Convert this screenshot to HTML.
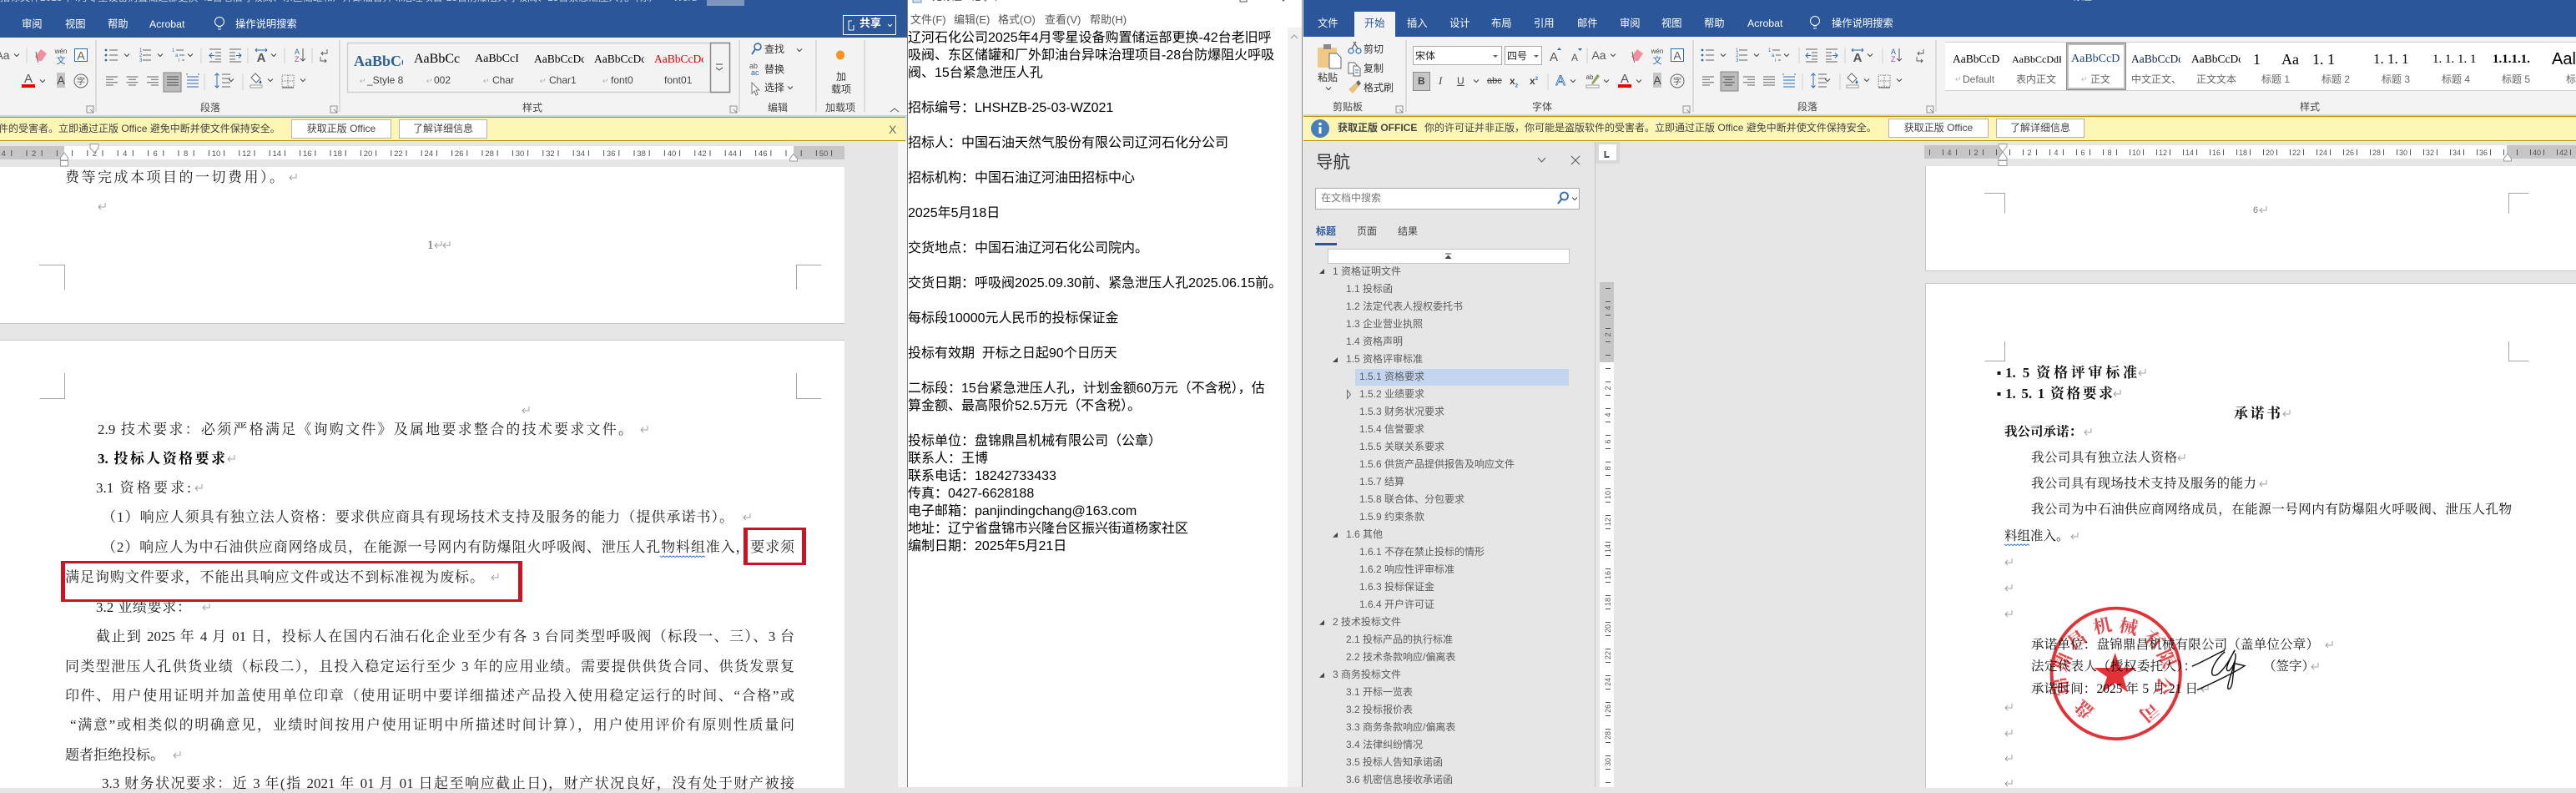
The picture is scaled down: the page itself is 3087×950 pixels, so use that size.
<!DOCTYPE html>
<html lang="zh-CN"><head><meta charset="utf-8"><title>Word 文档与记事本</title>
<style>
html,body{margin:0;padding:0;background:#e6e6e6}
body{position:relative;width:3087px;height:943px;overflow:hidden;font-family:"Liberation Sans","Noto Sans CJK SC",sans-serif}
.b{position:absolute}
.s{position:absolute;white-space:nowrap;font:12px/20px "Liberation Sans","Noto Sans CJK SC",sans-serif;color:#444}
.w{color:#fff;font-size:12.3px}
.d{position:absolute;white-space:nowrap;height:22px;font:15.5px/22px "Liberation Serif","Noto Serif CJK SC",serif;color:#111;text-align:justify;text-align-last:justify}
.l{font-size:17px;color:#222}
.h{font-size:17px;font-weight:700}
.g{position:absolute;overflow:hidden;white-space:nowrap;height:22px;font:14px/22px "Liberation Serif","Noto Serif CJK SC",serif;color:#000}
.btn{position:absolute;background:#fff;border:1px solid #b2b2b2;box-sizing:border-box;text-align:center;font:12px/21px "Liberation Sans","Noto Sans CJK SC",sans-serif;color:#444;white-space:nowrap}
.m{position:absolute;white-space:nowrap;font:13px/20px "Liberation Sans","Noto Sans CJK SC",sans-serif;color:#555;top:14px}
#np{position:absolute;left:1088px;top:35px;margin:0;font:16px/21px "Liberation Sans","Noto Sans CJK SC",sans-serif;color:#000;white-space:pre}
#nav{position:absolute;left:1555px;top:315.2px;font:12px/21px "Liberation Sans","Noto Sans CJK SC",sans-serif;color:#5c5c5c;white-space:nowrap}
#nav div{height:21px}
.a{padding-left:42px}.e{padding-left:58px}.f{padding-left:74px}
</style></head><body>

<!-- LEFT WINDOW -->
<div class="b" style="left:0;top:0;width:1087px;height:45px;background:#2b579a"></div>
<div class="b" style="left:0;top:45px;width:1087px;height:94px;background:#f3f3f3"></div>
<div class="b" style="left:0;top:138px;width:1087px;height:2px;background:#d2d2d2"></div>
<div class="b" style="left:0;top:140px;width:1085px;height:29px;background:#fcf6b4;border-top:1.5px solid #b88f00;border-bottom:1.5px solid #b88f00;box-sizing:border-box"></div>
<div class="b" style="left:847px;top:0;width:45px;height:7px;background:#7e97bf"></div>
<div class="s" style="left:0;top:-13px;color:#c7d3e6">招标文件2025年4月零星设备购置储运部更换-42台老旧呼吸阀、东区储罐和厂外卸油台异味治理项目-28台防爆阻火呼吸阀、15台紧急泄压人孔（标）&nbsp;&nbsp;-&nbsp;&nbsp;Word</div>
<div class="s w" style="left:26px;top:19px">审阅</div>
<div class="s w" style="left:78px;top:19px">视图</div>
<div class="s w" style="left:129px;top:19px">帮助</div>
<div class="s w" style="left:179px;top:19px">Acrobat</div>
<div class="s w" style="left:282px;top:19px">操作说明搜索</div>
<div class="b" style="left:1010px;top:18px;width:64px;height:24px;border:1px solid #fff;box-sizing:border-box"></div>
<div class="s w" style="left:1030px;top:18px;font-size:13px;font-weight:700">共享</div>

<div class="g" style="left:424px;top:62px;width:59px;font-size:18px;font-weight:700;color:#2e5f95">AaBbCc</div>
<div class="g" style="left:496px;top:60px;width:59px;font-size:16px">AaBbCc</div>
<div class="g" style="left:569px;top:60px;width:60px">AaBbCcI</div>
<div class="g" style="left:640px;top:60px;width:60px;font-size:13.5px">AaBbCcDc</div>
<div class="g" style="left:712px;top:60px;width:60px;font-size:13.5px">AaBbCcDc</div>
<div class="g" style="left:784px;top:60px;width:59px;font-size:13.5px;color:#e00000">AaBbCcDc</div>
<div class="s" style="left:440px;top:86px">_Style 8</div>
<div class="s" style="left:520px;top:86px">002</div>
<div class="s" style="left:590px;top:86px">Char</div>
<div class="s" style="left:658px;top:86px">Char1</div>
<div class="s" style="left:732px;top:86px">font0</div>
<div class="s" style="left:796px;top:86px">font01</div>
<div class="s" style="left:916px;top:49px;color:#333">查找</div>
<div class="s" style="left:916px;top:73px;color:#333">替换</div>
<div class="s" style="left:916px;top:95px;color:#333">选择</div>
<div class="s" style="left:1002px;top:82px;color:#333">加</div>
<div class="s" style="left:996px;top:97px;color:#333">载项</div>
<div class="s" style="left:240px;top:119px">段落</div>
<div class="s" style="left:626px;top:119px">样式</div>
<div class="s" style="left:920px;top:119px">编辑</div>
<div class="s" style="left:989px;top:119px">加载项</div>
<div class="s" style="left:-2px;top:144px;width:340px;overflow:hidden">件的受害者。立即通过正版 Office 避免中断并使文件保持安全。</div>
<div class="btn" style="left:349px;top:143px;width:120px;height:23px">获取正版 Office</div>
<div class="btn" style="left:478px;top:143px;width:106px;height:23px">了解详细信息</div>
<div class="s" style="left:1065px;top:145px;font-size:14px;color:#666">X</div>

<div class="b" style="left:0;top:175px;width:77px;height:16px;background:#c6c6c6"></div>
<div class="b" style="left:77px;top:175px;width:874px;height:16px;background:#fff"></div>
<div class="b" style="left:951px;top:175px;width:61px;height:16px;background:#c6c6c6"></div>
<div class="b" style="left:0;top:200px;width:1012px;height:187px;background:#fff;border-bottom:1px solid #c6c6c6"></div>
<div class="b" style="left:0;top:407px;width:1012px;height:536px;background:#fff;border-top:1px solid #c6c6c6"></div>
<div class="b" style="left:1076px;top:170px;width:11px;height:773px;background:#f6f6f6"></div>

<div class="d l" style="left:78px;top:202px;width:262px">费等完成本项目的一切费用）。</div>
<div class="s" style="left:512px;top:284px;font:15px/20px 'Liberation Serif',serif;color:#555">1</div>
<div class="d l" style="left:117px;top:504px;width:641px">2.9 技术要求：必须严格满足《询购文件》及属地要求整合的技术要求文件。</div>
<div class="d l" style="left:117px;top:539px;width:153px;font-weight:700;color:#000">3. 投标人资格要求</div>
<div class="d l" style="left:115px;top:574px;width:114px">3.1 资格要求:</div>
<div class="d l" style="left:122px;top:609px;width:757px">（1）响应人须具有独立法人资格：要求供应商具有现场技术支持及服务的能力（提供承诺书）。</div>
<div class="d l" style="left:122px;top:645px;width:830px">（2）响应人为中石油供应商网络成员，在能源一号网内有防爆阻火呼吸阀、泄压人孔物料组准入，要求须</div>
<div class="d l" style="left:78px;top:681px;width:502px">满足询购文件要求，不能出具响应文件或达不到标准视为废标。</div>
<div class="d l" style="left:115px;top:717px;width:114px">3.2 业绩要求：</div>
<div class="d l" style="left:115px;top:752px;width:837px">截止到 2025 年 4 月 01 日，投标人在国内石油石化企业至少有各 3 台同类型呼吸阀（标段一、三）、3 台</div>
<div class="d l" style="left:78px;top:788px;width:874px">同类型泄压人孔供货业绩（标段二），且投入稳定运行至少 3 年的应用业绩。需要提供供货合同、供货发票复</div>
<div class="d l" style="left:78px;top:823px;width:874px">印件、用户使用证明并加盖使用单位印章（使用证明中要详细描述产品投入使用稳定运行的时间、“合格”或</div>
<div class="d l" style="left:84px;top:858px;width:868px">“满意”或相类似的明确意见，业绩时间按用户使用证明中所描述时间计算），用户使用评价有原则性质量问</div>
<div class="d l" style="left:78px;top:894px;width:118px">题者拒绝投标。</div>
<div class="d l" style="left:122px;top:928px;width:830px">3.3 财务状况要求：近 3 年(指 2021 年 01 月 01 日起至响应截止日)，财产状况良好，没有处于财产被接</div>
<div class="b" style="left:891px;top:632px;width:75px;height:45px;box-sizing:border-box;border:solid #cc1325;border-width:3px 5px"></div>
<div class="b" style="left:73px;top:672px;width:553px;height:49px;box-sizing:border-box;border:solid #cc1325;border-width:3px 5px"></div>

<!-- NOTEPAD -->
<div class="b" style="left:1087px;top:0;width:473px;height:943px;background:#fff;border-left:1px solid #808080;box-sizing:border-box"></div>
<div class="b" style="left:1543px;top:33px;width:16.5px;height:910px;background:#f0f0f0"></div>
<div class="b" style="left:1559.5px;top:0;width:1px;height:943px;background:#8a8a8a"></div>
<div class="b" style="left:1560.5px;top:0;width:1.5px;height:943px;background:#eee"></div>
<div class="s" style="left:1117px;top:-14px;color:#444">无标题 - 记事本</div>
<div class="m" style="left:1091px">文件(F)</div>
<div class="m" style="left:1143px">编辑(E)</div>
<div class="m" style="left:1196px">格式(O)</div>
<div class="m" style="left:1252px">查看(V)</div>
<div class="m" style="left:1306px">帮助(H)</div>
<pre id="np">辽河石化公司2025年4月零星设备购置储运部更换-42台老旧呼
吸阀、东区储罐和厂外卸油台异味治理项目-28台防爆阻火呼吸
阀、15台紧急泄压人孔

招标编号：LHSHZB-25-03-WZ021

招标人：中国石油天然气股份有限公司辽河石化分公司

招标机构：中国石油辽河油田招标中心

2025年5月18日

交货地点：中国石油辽河石化公司院内。

交货日期：呼吸阀2025.09.30前、紧急泄压人孔2025.06.15前。

每标段10000元人民币的投标保证金

投标有效期  开标之日起90个日历天

二标段：15台紧急泄压人孔，计划金额60万元（不含税），估
算金额、最高限价52.5万元（不含税）。

投标单位：盘锦鼎昌机械有限公司（公章）
联系人：王博
联系电话：18242733433
传真：0427-6628188
电子邮箱：panjindingchang@163.com
地址：辽宁省盘锦市兴隆台区振兴街道杨家社区
编制日期：2025年5月21日</pre>

<!-- RIGHT WINDOW -->
<div class="b" style="left:1562px;top:0;width:1525px;height:44px;background:#2b579a"></div>
<div class="b" style="left:1562px;top:44px;width:1525px;height:94px;background:#f3f3f3"></div>
<div class="b" style="left:1562px;top:137px;width:1525px;height:2px;background:#d2d2d2"></div>
<div class="b" style="left:1562px;top:139px;width:1525px;height:30px;background:#fcf6b4;border-top:1.5px solid #b88f00;border-bottom:1.5px solid #b88f00;box-sizing:border-box"></div>
<div class="b" style="left:1623px;top:14px;width:49px;height:30px;background:#f3f3f3"></div>
<div class="s" style="left:2483px;top:-14px;color:#c7d3e6">标题 - Word</div>
<div class="s w" style="left:1579px;top:18px">文件</div>
<div class="s" style="left:1635px;top:18px;font-size:12.3px;color:#2b579a">开始</div>
<div class="s w" style="left:1686px;top:18px">插入</div>
<div class="s w" style="left:1737px;top:18px">设计</div>
<div class="s w" style="left:1787px;top:18px">布局</div>
<div class="s w" style="left:1838px;top:18px">引用</div>
<div class="s w" style="left:1890px;top:18px">邮件</div>
<div class="s w" style="left:1941px;top:18px">审阅</div>
<div class="s w" style="left:1991px;top:18px">视图</div>
<div class="s w" style="left:2042px;top:18px">帮助</div>
<div class="s w" style="left:2094px;top:18px">Acrobat</div>
<div class="s w" style="left:2195px;top:18px">操作说明搜索</div>

<div class="s" style="left:1579px;top:83px;color:#333">粘贴</div>
<div class="s" style="left:1634px;top:49px;color:#333">剪切</div>
<div class="s" style="left:1634px;top:72px;color:#333">复制</div>
<div class="s" style="left:1634px;top:95px;color:#333">格式刷</div>
<div class="s" style="left:1597px;top:118px">剪贴板</div>
<div class="s" style="left:1836px;top:118px">字体</div>
<div class="s" style="left:2154px;top:118px">段落</div>
<div class="s" style="left:2756px;top:118px">样式</div>
<div class="b" style="left:1693px;top:55px;width:107px;height:23px;background:#fff;border:1px solid #ababab;box-sizing:border-box"></div>
<div class="b" style="left:1803px;top:55px;width:45px;height:23px;background:#fff;border:1px solid #ababab;box-sizing:border-box"></div>
<div class="s" style="left:1696px;top:57px;color:#222">宋体</div>
<div class="s" style="left:1806px;top:57px;color:#222">四号</div>
<div class="b" style="left:1693px;top:86px;width:21px;height:23px;background:#c6c6c6;border:1px solid #8a8a8a;box-sizing:border-box"></div>
<div class="s" style="left:1699px;top:87px;font-weight:700;color:#444">B</div>
<div class="s" style="left:1724px;top:87px;font:italic 13px/20px 'Liberation Serif',serif">I</div>
<div class="s" style="left:1746px;top:87px;text-decoration:underline">U</div>
<div class="s" style="left:1782px;top:87px;text-decoration:line-through;font-size:11px">abc</div>
<div class="s" style="left:1809px;top:87px;font-weight:700">x<sub style="font-size:6px;color:#2b6cb0">2</sub></div>
<div class="s" style="left:1833px;top:87px;font-weight:700">x<sup style="font-size:6px;color:#2b6cb0;line-height:0">2</sup></div>

<div class="b" style="left:2331px;top:50px;width:756px;height:59px;background:#fff;border-top:1.5px solid #d0d0d0;border-bottom:1.5px solid #d0d0d0;box-sizing:border-box"></div>
<div class="b" style="left:2476px;top:51px;width:72px;height:57px;border:3px solid #bdbdbd;outline:1px solid #8a8a8a;outline-offset:-1px;box-sizing:border-box"></div>
<div class="g" style="left:2340px;top:60px;width:57px;font-size:13.5px">AaBbCcDc</div>
<div class="g" style="left:2411px;top:60px;width:59px;font-size:12px">AaBbCcDdE</div>
<div class="g" style="left:2482px;top:60px;width:60px;color:#1f3f77">AaBbCcD</div>
<div class="g" style="left:2554px;top:60px;width:59px;font-size:13.5px;color:#102040">AaBbCcDd</div>
<div class="g" style="left:2626px;top:60px;width:59px;font-size:13.5px">AaBbCcDc</div>
<div class="g" style="left:2700px;top:60px;width:20px;font-size:18px">1</div>
<div class="g" style="left:2734px;top:60px;width:26px;font-size:18px">Aa</div>
<div class="g" style="left:2771px;top:60px;width:35px;font-size:18px">1. 1</div>
<div class="g" style="left:2844px;top:60px;width:55px;font-size:17px">1. 1. 1</div>
<div class="g" style="left:2915px;top:60px;width:60px;font-size:15px">1. 1. 1. 1</div>
<div class="g" style="left:2987px;top:60px;width:60px;font-size:15px;font-weight:700">1.1.1.1.</div>
<div class="g" style="left:3058px;top:60px;width:29px;font:20px/22px 'Liberation Sans',sans-serif">Aal</div>
<div class="s" style="left:2352px;top:85px;color:#666">Default</div>
<div class="s" style="left:2416px;top:85px;color:#666">表内正文</div>
<div class="s" style="left:2505px;top:85px;color:#666">正文</div>
<div class="s" style="left:2554px;top:85px;color:#666">中文正文、</div>
<div class="s" style="left:2632px;top:85px;color:#666">正文文本</div>
<div class="s" style="left:2710px;top:85px;color:#666">标题 1</div>
<div class="s" style="left:2782px;top:85px;color:#666">标题 2</div>
<div class="s" style="left:2854px;top:85px;color:#666">标题 3</div>
<div class="s" style="left:2926px;top:85px;color:#666">标题 4</div>
<div class="s" style="left:2998px;top:85px;color:#666">标题 5</div>
<div class="s" style="left:3075px;top:85px;color:#666">标</div>

<div class="s" style="left:1603px;top:143px;font-weight:700;color:#444;font-size:12px">获取正版 OFFICE</div>
<div class="s" style="left:1707px;top:143px;font-size:12px;width:541px;text-align:justify;text-align-last:justify">你的许可证并非正版，你可能是盗版软件的受害者。立即通过正版 Office 避免中断并使文件保持安全。</div>
<div class="btn" style="left:2263px;top:142px;width:120px;height:23px">获取正版 Office</div>
<div class="btn" style="left:2392px;top:142px;width:106px;height:23px">了解详细信息</div>

<!-- Nav pane -->
<div class="b" style="left:1911px;top:170px;width:1px;height:773px;background:#c6c6c6"></div>
<div class="s" style="left:1577px;top:180px;font-size:20.5px;line-height:30px;color:#333">导航</div>
<div class="b" style="left:1576px;top:225px;width:317px;height:26px;background:#fff;border:1px solid #aaa;box-sizing:border-box"></div>
<div class="s" style="left:1583px;top:227px;color:#777">在文档中搜索</div>
<div class="s" style="left:1577px;top:267px;font-weight:700;color:#2b579a">标题</div>
<div class="s" style="left:1626px;top:267px">页面</div>
<div class="s" style="left:1675px;top:267px">结果</div>
<div class="b" style="left:1576px;top:291px;width:26px;height:3px;background:#2b579a"></div>
<div class="b" style="left:1591px;top:298px;width:290px;height:18px;background:#fff;border:1px solid #c6c6c6;box-sizing:border-box"></div>
<div class="b" style="left:1624px;top:442px;width:256px;height:20px;background:#c4d5f0"></div>
<div id="nav">
<div class="a">1 资格证明文件</div>
<div class="e">1.1 投标函</div>
<div class="e">1.2 法定代表人授权委托书</div>
<div class="e">1.3 企业营业执照</div>
<div class="e">1.4 资格声明</div>
<div class="e">1.5 资格评审标准</div>
<div class="f">1.5.1 资格要求</div>
<div class="f">1.5.2 业绩要求</div>
<div class="f">1.5.3 财务状况要求</div>
<div class="f">1.5.4 信誉要求</div>
<div class="f">1.5.5 关联关系要求</div>
<div class="f">1.5.6 供货产品提供报告及响应文件</div>
<div class="f">1.5.7 结算</div>
<div class="f">1.5.8 联合体、分包要求</div>
<div class="f">1.5.9 约束条款</div>
<div class="e">1.6 其他</div>
<div class="f">1.6.1 不存在禁止投标的情形</div>
<div class="f">1.6.2 响应性评审标准</div>
<div class="f">1.6.3 投标保证金</div>
<div class="f">1.6.4 开户许可证</div>
<div class="a">2 技术投标文件</div>
<div class="e">2.1 投标产品的执行标准</div>
<div class="e">2.2 技术条款响应/偏离表</div>
<div class="a">3 商务投标文件</div>
<div class="e">3.1 开标一览表</div>
<div class="e">3.2 投标报价表</div>
<div class="e">3.3 商务条款响应/偏离表</div>
<div class="e">3.4 法律纠纷情况</div>
<div class="e">3.5 投标人告知承诺函</div>
<div class="e">3.6 机密信息接收承诺函</div>
</div>

<!-- Right ruler + pages -->
<div class="b" style="left:1912px;top:170px;width:29px;height:26px;background:#d8d8d8"></div>
<div class="b" style="left:1916px;top:173px;width:21px;height:19px;background:#fff"></div>
<div class="b" style="left:1917px;top:338px;width:17px;height:96px;background:#c6c6c6"></div>
<div class="b" style="left:1917px;top:434px;width:17px;height:509px;background:#fff"></div>
<div class="b" style="left:2306px;top:174px;width:94px;height:16px;background:#c6c6c6"></div>
<div class="b" style="left:2400px;top:174px;width:604px;height:16px;background:#fff"></div>
<div class="b" style="left:3004px;top:174px;width:83px;height:16px;background:#c6c6c6"></div>
<div class="b" style="left:2307px;top:199px;width:780px;height:125px;background:#fff;border-left:1px solid #c6c6c6;border-bottom:1px solid #c6c6c6"></div>
<div class="b" style="left:2307px;top:339px;width:780px;height:604px;background:#fff;border-left:1px solid #c6c6c6;border-top:1px solid #c6c6c6"></div>
<div class="s" style="left:2700px;top:242px;font-size:11px;color:#777">6</div>

<div class="d h" style="left:2403px;top:436px;width:158px">1. 5 资格评审标准</div>
<div class="d h" style="left:2403px;top:461px;width:129px">1. 5. 1 资格要求</div>
<div class="d h" style="left:2677px;top:485px;width:56px">承诺书</div>
<div class="d" style="left:2402px;top:507px;width:87px;font-weight:700;font-size:15.5px">我公司承诺：</div>
<div class="d" style="left:2434px;top:538px;width:175px">我公司具有独立法人资格</div>
<div class="d" style="left:2434px;top:569px;width:270px">我公司具有现场技术支持及服务的能力</div>
<div class="d" style="left:2434px;top:600px;width:576px">我公司为中石油供应商网络成员，在能源一号网内有防爆阻火呼吸阀、泄压人孔物</div>
<div class="d" style="left:2402px;top:632px;width:71px">料组准入。</div>
<div class="d" style="left:2434px;top:762px;width:345px">承诺单位：盘锦鼎昌机械有限公司（盖单位公章）</div>
<div class="d" style="left:2434px;top:788px;width:198px">法定代表人（授权委托人）：</div>
<div class="d" style="left:2712px;top:788px;width:50px">（签字）</div>
<div class="d" style="left:2434px;top:815px;width:200px">承诺时间：2025 年 5 月 21 日</div>

<!-- Overlay icons, rulers, marks -->
<svg class="b" style="left:0;top:0" width="3087" height="943" viewBox="0 0 3087 943" font-family="Liberation Sans, Noto Sans CJK SC, sans-serif">
<defs>
<path id="c" d="M-3 -1.5l3 3 3-3" fill="none" stroke="#444"/>
<path id="r" d="M4 -5v5h-8m3-3l-3 3 3 3" fill="none" stroke="#a0a0a0"/>
<path id="lau" d="M0 0h8v8h-8z M4 4l4 4m-3 0h3v-3" fill="none" stroke="#777" stroke-width=".8"/>
<path id="al" d="M-7-5h14M-7-1.7h9M-7 1.7h14M-7 5h9" stroke="#666" fill="none"/>
<path id="ac" d="M-7-5h14M-4.5-1.7h9M-7 1.7h14M-4.5 5h9" stroke="#666" fill="none"/>
<path id="ar" d="M-7-5h14M-2-1.7h9M-7 1.7h14M-2 5h9" stroke="#666" fill="none"/>
<path id="aj" d="M-7-5h14M-7-1.7h14M-7 1.7h14M-7 5h14" stroke="#666" fill="none"/>
<g id="para">
<circle cx="-7" cy="60" r="1.4" fill="#2b6cb0"/><circle cx="-7" cy="66" r="1.4" fill="#2b6cb0"/><circle cx="-7" cy="72" r="1.4" fill="#2b6cb0"/>
<path d="M-3 60h10M-3 66h10M-3 72h10" stroke="#666"/>
<use href="#c" x="18" y="66"/>
<text x="33" y="62" font-size="6" fill="#2b6cb0">1</text><text x="33" y="68" font-size="6" fill="#2b6cb0">2</text><text x="33" y="74" font-size="6" fill="#2b6cb0">3</text>
<path d="M37 60h10M37 66h10M37 72h10" stroke="#666"/>
<use href="#c" x="58" y="66"/>
<text x="72" y="62" font-size="6" fill="#2b6cb0">1</text><text x="76" y="68" font-size="6" fill="#2b6cb0">a</text><text x="80" y="74" font-size="6" fill="#2b6cb0">i</text>
<path d="M77 60h9M81 66h6M84 72h3" stroke="#666"/>
<use href="#c" x="94" y="66"/>
<path d="M117 59h14M124 63h7M124 67h7M124 71h7M117 74h14" stroke="#666" fill="none"/><path d="M123 66.5h-6m3-3l-3 3 3 3" stroke="#2b6cb0" fill="none"/>
<path d="M141 59h14M141 63h7M141 67h7M141 71h7M141 74h14" stroke="#666" fill="none"/><path d="M149 66.5h6m-3-3l3 3-3 3" stroke="#2b6cb0" fill="none"/>
<text x="179" y="74" font-size="15" font-weight="700" text-anchor="middle" fill="#555">A</text><path d="M172 60h14m-14 0l2-2m-2 2l2 2m12-2l-2-2m2 2l-2 2" stroke="#2b6cb0" fill="none"/>
<use href="#c" x="194" y="66"/>
<text x="219" y="65" font-size="9" fill="#2b6cb0">A</text><text x="219" y="74" font-size="9" fill="#8a4bb0">Z</text>
<path d="M229 58v15m-3-3l3 3 3-3" stroke="#555" fill="none"/>
<path d="M258 59v5h-7m2-2l-2 2 2 2M250 68v5h7m-2-2l2 2-2 2" stroke="#555" stroke-width=".9" fill="none"/>
<use href="#al" x="0" y="97"/><use href="#ac" x="24.5" y="97"/><use href="#ar" x="49" y="97"/><use href="#aj" x="73" y="97"/>
<path d="M90 88v2M104 88v2M90 92h14M90 96h14M90 100h14M90 104h14" stroke="#2b6cb0" fill="none"/>
<path d="M132 89h10M132 94h10M132 99h10M132 104h10" stroke="#666"/><path d="M126 88v17m-2.500-14.500l2.500-2.500 2.500 2.500m-5 12l2.500 2.500 2.500-2.500" stroke="#2b6cb0" fill="none"/>
<use href="#c" x="143" y="96"/>
<path d="M172 88l6 6-5 5-6-6z" fill="#fff" stroke="#666"/><path d="M178 96c2 3 2 4 0 4s-2-1 0-4" fill="#2b6cb0"/><rect x="166" y="102" width="14" height="3" fill="#fff" stroke="#999"/>
<use href="#c" x="190" y="96"/>
<path d="M204 90h14v14h-14z" fill="none" stroke="#777" stroke-dasharray="1 1"/><path d="M204 97h14M211 90v14" stroke="#777" stroke-dasharray="1 1"/><path d="M204 105h14" stroke="#555"/>
<use href="#c" x="229" y="96"/>
</g>
<g id="fontr">
<text x="1916" y="71" font-size="14" text-anchor="middle" fill="#555">Aa</text>
<use href="#c" x="1933" y="66"/>
<path d="M1955 68l7-9 7 5-6 9h-3z" fill="#ef8f9f"/><path d="M1956 62c1 5 1 9 3 13" stroke="#666" fill="none"/>
<text x="1986" y="64" font-size="8" text-anchor="middle" fill="#444">wén</text>
<text x="1986" y="76" font-size="11" text-anchor="middle" fill="#2b6cb0">文</text>
<rect x="2002.500" y="58.500" width="15" height="15" fill="#fff" stroke="#2b6cb0"/>
<text x="2010" y="71.500" font-size="14" text-anchor="middle" fill="#555">A</text>
<text x="1947" y="99" font-size="15" text-anchor="middle" fill="#555">A</text>
<rect x="1939" y="101" width="16" height="4" fill="#e00"/>
<use href="#c" x="1964" y="97"/>
<rect x="1981" y="87" width="10" height="18" fill="#c6c6c6"/>
<text x="1986" y="101" font-size="14" text-anchor="middle" fill="#444">A</text>
<circle cx="2010" cy="97" r="8" fill="none" stroke="#666"/>
<text x="2010" y="101" font-size="10" text-anchor="middle" fill="#555">字</text>
</g>
</defs>

<!-- left ribbon -->
<use href="#fontr" transform="translate(-1913 0)"/>
<use href="#para" transform="translate(134 0)"/>
<rect x="196" y="87" width="21" height="23" fill="#c6c6c6" stroke="#8a8a8a" style="mix-blend-mode:multiply"/>
<path d="M115 48v86M407 48v86M886 48v86M978 48v86M1036 48v86" stroke="#c6c6c6"/>
<path d="M241 57v19M297 57v19M341 57v19M374 57v19M245 88v20M291 88v20M32 57v19" stroke="#d0d0d0"/>
<use href="#lau" x="104" y="127"/><use href="#lau" x="396" y="127"/><use href="#lau" x="875" y="127"/>
<rect x="416.500" y="51.500" width="458" height="59" fill="none" stroke="#cfcfcf" stroke-width="1.500"/>
<rect x="851.500" y="51.500" width="23" height="59" fill="none" stroke="#8a8a8a" stroke-width="1.500"/>
<path d="M858 77h8M858 81l4 3 4-3" stroke="#444" fill="none"/>
<path d="M1067 134l5-4 5 4" fill="none" stroke="#555"/>
<use href="#r" transform="translate(434 97) scale(.6)"/><use href="#r" transform="translate(514 97) scale(.6)"/><use href="#r" transform="translate(582 97) scale(.6)"/><use href="#r" transform="translate(650 97) scale(.6)"/><use href="#r" transform="translate(725 97) scale(.6)"/>
<circle cx="908" cy="56" r="4" fill="none" stroke="#2b6cb0" stroke-width="1.500"/><path d="M905 59l-4 6" stroke="#2b6cb0" stroke-width="1.800"/>
<use href="#c" x="958" y="60"/>
<text x="898" y="82" font-size="9" fill="#555">ab</text><text x="900" y="90" font-size="9" fill="#2b6cb0">ac</text>
<path d="M901 99v13l3-3 2 5 2-1-2-5h4z" fill="#fff" stroke="#777"/>
<use href="#c" x="947" y="105"/>
<ellipse cx="1007" cy="66" rx="5" ry="5.500" fill="#f7941d"/>
<circle cx="263" cy="26" r="5.500" fill="none" stroke="#fff"/><path d="M261 32h4M261 35h4" stroke="#fff"/>
<path d="M1017 36v-11h4M1017 36h6v-6" stroke="#fff" fill="none"/><path d="M1064 29l2.500 2.500 2.500-2.500" stroke="#fff" fill="none"/>

<!-- left ruler -->
<line x1="-4.900" y1="183.500" x2="1012" y2="183.500" stroke="#555" stroke-width="7" stroke-dasharray="1 17.200"/>
<g font-size="9.500" fill="#555" text-anchor="middle">
<text x="4.200" y="187">4</text><text x="40.600" y="187">2</text><text x="113.400" y="187">2</text><text x="149.800" y="187">4</text><text x="186.200" y="187">6</text><text x="222.600" y="187">8</text><text x="259" y="187">10</text><text x="295.400" y="187">12</text><text x="331.800" y="187">14</text><text x="368.200" y="187">16</text><text x="404.600" y="187">18</text><text x="441" y="187">20</text><text x="477.400" y="187">22</text><text x="513.800" y="187">24</text><text x="550.200" y="187">26</text><text x="586.600" y="187">28</text><text x="623" y="187">30</text><text x="659.400" y="187">32</text><text x="695.800" y="187">34</text><text x="732.200" y="187">36</text><text x="768.600" y="187">38</text><text x="805" y="187">40</text><text x="841.400" y="187">42</text><text x="877.800" y="187">44</text><text x="914.200" y="187">46</text><text x="987" y="187">50</text>
</g>
<path d="M108 172.500h10v5l-5 5.500-5-5.500z" fill="#fff" stroke="#999"/>
<path d="M72.500 192v-3l4.500-6 4.500 6v3z" fill="#fff" stroke="#999"/><rect x="72.500" y="192.500" width="9" height="6.500" fill="#fff" stroke="#999"/>
<path d="M946.500 193v-3l4.500-5.500 4.500 5.500v3z" fill="#fff" stroke="#999"/>
<!-- left page marks -->
<path d="M47 317.500h30.500v30M954.500 347v-29.500h30M77.500 447v30.500h-30M954.500 447v30.500h30" fill="none" stroke="#a6a6a6"/>
<use href="#r" x="351" y="213"/><use href="#r" x="122" y="248"/><use href="#r" x="525" y="294"/><use href="#r" x="535" y="294"/><use href="#r" x="630" y="492"/><use href="#r" x="772" y="515"/><use href="#r" x="277" y="550"/><use href="#r" x="238" y="585"/><use href="#r" x="895" y="620"/><use href="#r" x="593" y="692"/><use href="#r" x="247" y="728"/><use href="#r" x="212" y="905"/>
<path d="M791 666l2 1.500 2-1.500 2 1.500 2-1.500 2 1.500 2-1.500 2 1.500 2-1.500 2 1.500 2-1.500 2 1.500 2-1.500 2 1.500 2-1.500 2 1.500 2-1.500 2 1.500 2-1.500 2 1.500 2-1.500 2 1.500 2-1.500 2 1.500 2-1.500 2 1.500 2-1.500 2 1.500" fill="none" stroke="#3a74d8"/>

<!-- notepad chrome -->
<rect x="1094" y="-6" width="10" height="9" fill="#cfe0ee" stroke="#6d93ad"/>
<rect x="1486" y="-6" width="8" height="8" fill="none" stroke="#555"/>
<path d="M1534-3l4 4 4-4" fill="none" stroke="#555"/>
<path d="M1547 46l4-4 4 4" fill="none" stroke="#b0b0b0" stroke-width="1.500"/>

<!-- right ribbon -->
<rect x="1579" y="57" width="23" height="24" rx="1" fill="#f0c987"/><rect x="1586" y="53" width="9" height="6" fill="#8a8a8a"/>
<path d="M1593 64h9l5 5v13h-14z" fill="#fff" stroke="#666"/>
<use href="#c" x="1592" y="106"/>
<circle cx="1619" cy="61" r="3" fill="none" stroke="#2b6cb0" stroke-width="1.200"/><circle cx="1628" cy="61" r="3" fill="none" stroke="#2b6cb0" stroke-width="1.200"/><path d="M1620 58l5-8M1627 58l-5-8" stroke="#666" stroke-width="1.200"/>
<path d="M1616 75h7l3 3v10h-10z" fill="#fff" stroke="#666"/><path d="M1622 79h5l3 3v9h-8z" fill="#fff" stroke="#666"/><path d="M1624 84h4M1624 87h4" stroke="#2b6cb0"/>
<path d="M1616 107l9-8 4 4-8 9z" fill="#e8c27c"/><path d="M1625 99l3-3 3 4-3 3z" fill="#666"/>
<use href="#lau" x="1673" y="127"/><use href="#lau" x="2017" y="127"/><use href="#lau" x="2309" y="127"/>
<path d="M1685 48v86M2029 48v86M2320 48v86" stroke="#c6c6c6"/>
<path d="M1902 57v19M1855 88v20M2156 57v19M2211 57v19M2256 57v19M2160 88v20M2205 88v20" stroke="#d0d0d0"/>
<path d="M1789 66l3 3 3-3z M1838 66l3 3 3-3z" fill="#666"/>
<text x="1862" y="73" font-size="15" text-anchor="middle" fill="#555">A</text><path d="M1866 60l2.500-3 2.500 3z" fill="#2b6cb0"/>
<text x="1887" y="73" font-size="12" text-anchor="middle" fill="#555">A</text><path d="M1891 58l2.500 3 2.500-3z" fill="#2b6cb0"/>
<use href="#c" x="1769" y="97"/>
<text x="1870" y="102" font-size="17" text-anchor="middle" fill="#fff" stroke="#3a76c4" stroke-width=".9">A</text><use href="#c" x="1885" y="97"/>
<text x="1905" y="95" font-size="8" text-anchor="middle" fill="#444">ab</text><path d="M1907 100l7-11 3 2-8 10z" fill="#8aa05a"/><rect x="1901" y="102" width="15" height="3" fill="#fff" stroke="#999"/><use href="#c" x="1925" y="97"/>
<use href="#fontr"/>
<use href="#para" transform="translate(2047 0)"/>
<rect x="2062" y="86" width="21" height="23" fill="#c6c6c6" stroke="#8a8a8a" style="mix-blend-mode:multiply"/>
<use href="#r" transform="translate(2346 95) scale(.6)"/><use href="#r" transform="translate(2497 95) scale(.6)"/>
<circle cx="1582" cy="154" r="11" fill="#4a7ebb"/><rect x="1580.500" y="152" width="3" height="8" fill="#fff"/><circle cx="1582" cy="148.500" r="1.800" fill="#fff"/>
<circle cx="2175" cy="25" r="5.500" fill="none" stroke="#fff"/><path d="M2173 31h4M2173 34h4" stroke="#fff"/>
<path d="M1586 0h10v-3h-10z" fill="#fff"/>

<!-- nav -->
<path d="M1843 189l4.500 5 4.500-5M1883 187l10 10m0-10l-10 10" fill="none" stroke="#555"/>
<circle cx="1874.500" cy="235" r="4.500" fill="none" stroke="#2b6cb0" stroke-width="1.800"/><path d="M1871 239l-4 5" stroke="#2b6cb0" stroke-width="2"/>
<use href="#c" x="1887" y="238"/>
<path d="M1732 304h7" stroke="#444"/><path d="M1731.500 310l4-4.500 4 4.500z" fill="#444"/>
<path d="M1587 322v6h-6zM1603 428v6h-6zM1603 637.700v6h-6zM1587 742.700v6h-6zM1587 805.700v6h-6z" fill="#444"/>
<path d="M1614.500 467.500l4 5-4 5z" fill="none" stroke="#666"/>
<path d="M1923.500 181v7h5" fill="none" stroke="#555" stroke-width="2"/>

<!-- vertical ruler -->
<line x1="1927" y1="345" x2="1927" y2="943" stroke="#555" stroke-width="6" stroke-dasharray="1 15"/>
<g font-size="9" fill="#555" text-anchor="middle">
<text transform="translate(1930 369) rotate(-90)">4</text><text transform="translate(1930 401) rotate(-90)">2</text><text transform="translate(1930 465) rotate(-90)">2</text><text transform="translate(1930 497) rotate(-90)">4</text><text transform="translate(1930 529) rotate(-90)">6</text><text transform="translate(1930 561) rotate(-90)">8</text><text transform="translate(1930 593) rotate(-90)">10</text><text transform="translate(1930 625) rotate(-90)">12</text><text transform="translate(1930 657) rotate(-90)">14</text><text transform="translate(1930 689) rotate(-90)">16</text><text transform="translate(1930 721) rotate(-90)">18</text><text transform="translate(1930 753) rotate(-90)">20</text><text transform="translate(1930 785) rotate(-90)">22</text><text transform="translate(1930 817) rotate(-90)">24</text><text transform="translate(1930 849) rotate(-90)">26</text><text transform="translate(1930 881) rotate(-90)">28</text><text transform="translate(1930 913) rotate(-90)">30</text>
</g>

<!-- right ruler -->
<line x1="2312" y1="182.500" x2="3087" y2="182.500" stroke="#555" stroke-width="7" stroke-dasharray="1 15"/>
<g font-size="9" fill="#555" text-anchor="middle">
<text x="2336" y="186">4</text><text x="2368" y="186">2</text><text x="2432" y="186">2</text><text x="2464" y="186">4</text><text x="2496" y="186">6</text><text x="2528" y="186">8</text><text x="2560" y="186">10</text><text x="2592" y="186">12</text><text x="2624" y="186">14</text><text x="2656" y="186">16</text><text x="2688" y="186">18</text><text x="2720" y="186">20</text><text x="2752" y="186">22</text><text x="2784" y="186">24</text><text x="2816" y="186">26</text><text x="2848" y="186">28</text><text x="2880" y="186">30</text><text x="2912" y="186">32</text><text x="2944" y="186">34</text><text x="2976" y="186">36</text><text x="3040" y="186">40</text><text x="3072" y="186">42</text>
</g>
<path d="M2395 172.500h10v3l-5 6.500-5-6.500zM2395 192v-3l5-7 5 7v3z" fill="#fff" stroke="#999"/><rect x="2395" y="192.500" width="10" height="6" fill="#fff" stroke="#999"/>
<path d="M3000.500 193v-3l4.500-6 4.500 6v3z" fill="#fff" stroke="#999"/>
<!-- right page marks -->
<path d="M2378 231.500h24.500v24M3006.500 255.500v-24h24M2402.500 409v23.500h-24M3006.500 409v23.500h24" fill="none" stroke="#a6a6a6"/>
<use href="#r" x="2712" y="252"/>
<rect x="2393.500" y="445" width="4" height="4" fill="#111"/><rect x="2393.500" y="470" width="4" height="4" fill="#111"/>
<use href="#r" x="2567" y="447"/><use href="#r" x="2537" y="472"/><use href="#r" x="2740" y="496"/><use href="#r" x="2502" y="518"/><use href="#r" x="2614" y="549"/><use href="#r" x="2712" y="580"/><use href="#r" x="2486" y="643"/><use href="#r" x="2407" y="674"/><use href="#r" x="2407" y="705"/><use href="#r" x="2407" y="736"/><use href="#r" x="2791" y="773"/><use href="#r" x="2774" y="799"/><use href="#r" x="2642" y="826"/><use href="#r" x="2407" y="848"/><use href="#r" x="2407" y="879"/><use href="#r" x="2407" y="909"/><use href="#r" x="2407" y="939"/>
<path d="M2402 652l2 1.500 2-1.500 2 1.500 2-1.500 2 1.500 2-1.500 2 1.500 2-1.500 2 1.500 2-1.500 2 1.500 2-1.500 2 1.500 2-1.500 2 1.500" fill="none" stroke="#3a74d8"/>
</svg>

<!-- Stamp and signature, coordinates in zoomed space -->
<svg class="b" style="left:2300px;top:400px;mix-blend-mode:multiply" width="560" height="543" viewBox="0 0 1568 1568" preserveAspectRatio="none" font-family="Liberation Serif, Noto Serif CJK SC, serif">
<ellipse cx="660" cy="1175" rx="216" ry="226" fill="none" stroke="#e23237" stroke-width="11"/>
<polygon points="657,1103 674,1155 728,1155 684,1187 700,1240 657,1208 613,1240 630,1187 586,1155 640,1155" fill="#e23237"/>
<g fill="#e5484c" font-size="62" font-weight="700" text-anchor="middle" dominant-baseline="central">
<text transform="translate(615 1012) rotate(-12)">机</text>
<text transform="translate(702 1015) rotate(12)">械</text>
<text transform="translate(785 1060) rotate(38)">有</text>
<text transform="translate(828 1125) rotate(65)">限</text>
<text transform="translate(820 1218) rotate(100)">公</text>
<text transform="translate(770 1308) rotate(140)">司</text>
<text transform="translate(530 1060) rotate(-35)">昌</text>
<text transform="translate(483 1135) rotate(-65)">鼎</text>
<text transform="translate(478 1220) rotate(-100)">锦</text>
<text transform="translate(555 1298) rotate(-140)">盘</text>
</g>
<path d="M915 1150C960 1130 1000 1105 1025 1095M1025 1100C990 1130 975 1170 985 1180 1000 1190 1030 1150 1050 1110 1060 1095 1060 1090 1055 1100 1040 1130 1020 1170 1040 1165 1055 1150 1065 1120 1060 1105M1060 1130C1050 1170 1035 1205 1035 1225 1040 1235 1050 1225 1052 1190L1058 1140 1092 1148C1060 1170 990 1205 932 1232" fill="none" stroke="#111" stroke-width="4"/>
</svg>
</body></html>
